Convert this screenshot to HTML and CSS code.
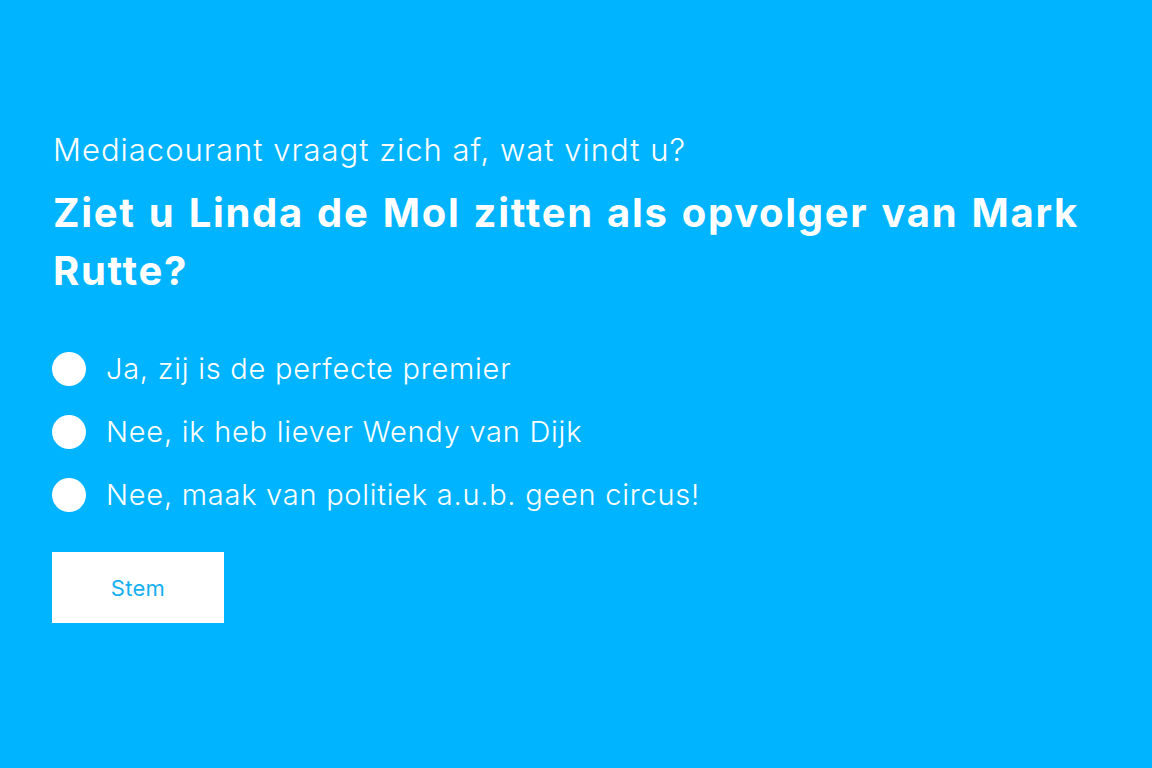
FILE: index.html
```html
<!DOCTYPE html>
<html lang="nl">
<head>
<meta charset="utf-8">
<link rel="stylesheet" href="styles.css">
</head>
<body>
<main class="poll">
  <p class="intro">Mediacourant vraagt zich af, wat vindt u?</p>
  <h1 class="question">Ziet u Linda de Mol zitten als opvolger van Mark Rutte?</h1>
  <ul class="options">
    <li class="option"><span class="radio"></span><span class="label">Ja, zij is de perfecte premier</span></li>
    <li class="option"><span class="radio"></span><span class="label">Nee, ik heb liever Wendy van Dijk</span></li>
    <li class="option"><span class="radio"></span><span class="label">Nee, maak van politiek a.u.b. geen circus!</span></li>
  </ul>
  <button class="vote">Stem</button>
</main>
</body>
</html>
```

FILE: styles.css
```css
html, body {
  margin: 0;
  padding: 0;
  background: #00b4ff;
  height: 100%;
}
body {
  font-family: "Inter", "Open Sans", sans-serif;
  color: #ffffff;
}
.poll {
  padding: 128px 52px 0 53px;
  display: flex;
  flex-direction: column;
  align-items: flex-start;
}
.intro {
  margin: 0;
  font-size: 31px;
  font-weight: 300;
  line-height: 44px;
  letter-spacing: 1px;
}
.question {
  margin: 12px 0 0;
  font-size: 40px;
  font-weight: 700;
  line-height: 58px;
  letter-spacing: 1.7px;
  word-spacing: 2px;
  max-width: 1045px;
}
.options {
  list-style: none;
  margin: 51px 0 0;
  padding: 0;
  display: flex;
  flex-direction: column;
  gap: 28px;
}
.option {
  display: flex;
  align-items: center;
  gap: 20px;
  height: 35px;
}
.radio {
  width: 34px;
  height: 34px;
  border-radius: 50%;
  background: #ffffff;
  flex: none;
  margin-left: -1px;
}
.label {
  font-size: 29px;
  font-weight: 300;
  letter-spacing: 0.75px;
}
.vote {
  margin-top: 40px;
  margin-left: -1px;
  width: 172px;
  height: 71px;
  border: none;
  background: #ffffff;
  color: #14b0f2;
  font-family: inherit;
  font-size: 22px;
  font-weight: 400;
  letter-spacing: 0.3px;
  cursor: pointer;
}
```
